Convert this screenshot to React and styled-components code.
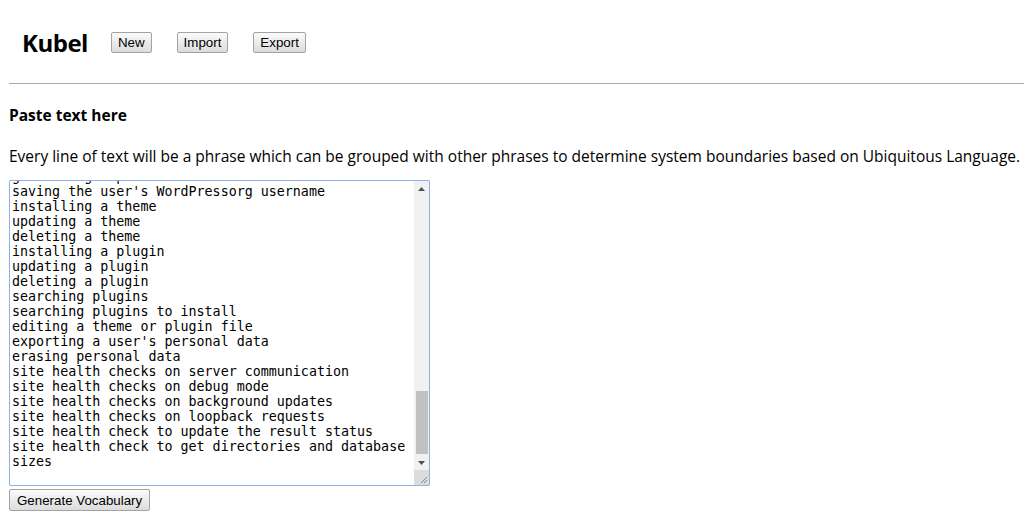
import { useEffect, useRef } from 'react';
import styled, { createGlobalStyle } from 'styled-components';

const GlobalStyle = createGlobalStyle`
  body {
    margin: 8px 0 8px 9px;
    font-family: "Open Sans", "DejaVu Sans", sans-serif;
    font-size: 15.5px;
    color: #000;
    background: #fff;
    overflow: hidden;
  }
`;

const Page = styled.div`
  width: 1015px;
`;

const Header = styled.header`
  display: flex;
  align-items: center;
  gap: 23px;
  height: 68px;
  padding: 0 13px;
  box-sizing: border-box;
`;

const Logo = styled.h1`
  margin: 0;
  font-size: 24px;
  font-weight: 700;
  letter-spacing: -0.5px;
`;

const Button = styled.button`
  font-family: "Liberation Sans", Arial, sans-serif;
  font-size: 13.333px;
  color: #000;
  height: 21px;
  padding: 0 6px;
  border: 1px solid #a3a3a3;
  border-radius: 2px;
  background: linear-gradient(#fbfbfb, #dcdcdc);
  box-sizing: border-box;
  cursor: pointer;
`;

const Actions = styled.div`
  display: flex;
  gap: 25px;
`;

const Rule = styled.hr`
  border: none;
  border-top: 1px solid #a9a9a9;
  margin: 7px 0 0;
`;

const Section = styled.section`
  padding-top: 21px;
`;

const Title = styled.h3`
  margin: 0;
  font-size: 15.5px;
  line-height: 20px;
  font-weight: 700;
`;

const Intro = styled.p`
  margin: 21px 0 14px;
  line-height: 20px;
  white-space: nowrap;
`;

const Field = styled.div`
  display: flex;
  width: 421px;
  height: 306px;
  box-sizing: border-box;
  border: 1px solid #8fb2e6;
  border-radius: 1px;
  background: #fff;
`;

const Input = styled.textarea`
  flex: 1;
  min-width: 0;
  box-sizing: border-box;
  padding: 2px 2px 1px;
  margin: 0;
  border: none;
  outline: none;
  resize: none;
  overflow: hidden;
  font-family: "DejaVu Sans Mono", monospace;
  font-size: 13.333px;
  line-height: 15px;
  color: #000;
  caret-color: #000;
  background: transparent;
`;

const ScrollBar = styled.div`
  display: flex;
  flex-direction: column;
  width: 15px;
  flex: none;
  background: #f1f1f1;
`;

const ScrollButton = styled.div`
  display: flex;
  align-items: center;
  justify-content: center;
  height: 15px;
  flex: none;
`;

const Track = styled.div`
  flex: 1;
  display: flex;
  flex-direction: column;
  justify-content: flex-end;
  padding-bottom: 1px;
`;

const Thumb = styled.div`
  height: 63px;
  margin: 0 1px 0 2px;
  background: #c1c1c1;
`;

const Corner = styled.div`
  height: 15px;
  flex: none;
  background: #dcdcdc;
  display: flex;
  align-items: flex-end;
  justify-content: flex-end;
`;

const GenerateButton = styled(Button)`
  margin-top: 3px;
  height: 22px;
  padding: 0 7px;
`;

const Arrow = ({ down }) => (
  <svg width="7" height="4" viewBox="0 0 7 4">
    <path d={down ? 'M0 0 L7 0 L3.5 4 Z' : 'M0 4 L7 4 L3.5 0 Z'} fill="#505050" />
  </svg>
);

const phrases = [
  'writing a post',
  'editing a post',
  'publishing a post',
  'scheduling a post',
  'deleting a post',
  'restoring a post from trash',
  'creating a draft',
  'previewing a post',
  'adding a category',
  'editing a category',
  'deleting a category',
  'adding a tag',
  'editing a tag',
  'deleting a tag',
  'uploading media',
  'editing an image',
  'deleting media',
  'inserting media into a post',
  'creating a page',
  'editing a page',
  'deleting a page',
  'setting a page template',
  'approving a comment',
  'replying to a comment',
  'marking a comment as spam',
  'deleting a comment',
  'moderating comments',
  'creating a menu',
  'adding items to a menu',
  'assigning a menu location',
  'adding a widget',
  'removing a widget',
  'customizing the theme',
  'changing the site title',
  'changing the site tagline',
  'setting the front page',
  'changing permalinks',
  'changing the timezone',
  'changing the date format',
  'adding a user',
  'editing a user',
  'deleting a user',
  "changing a user's role",
  'resetting a password',
  'logging in',
  'logging out',
  'registering a new account',
  'updating a user profile',
  'importing content',
  'exporting content',
  'updating WordPress core',
  'checking for updates',
  'enabling automatic updates',
  'activating a plugin',
  'deactivating a plugin',
  'activating a theme',
  'creating an application password',
  'revoking an application password',
  'creating a privacy policy page',
  'generating a password',
  "saving the user's WordPressorg username",
  'installing a theme',
  'updating a theme',
  'deleting a theme',
  'installing a plugin',
  'updating a plugin',
  'deleting a plugin',
  'searching plugins',
  'searching plugins to install',
  'editing a theme or plugin file',
  "exporting a user's personal data",
  'erasing personal data',
  'site health checks on server communication',
  'site health checks on debug mode',
  'site health checks on background updates',
  'site health checks on loopback requests',
  'site health check to update the result status',
  'site health check to get directories and database sizes',
];

const initialText = phrases.join('\n') + '\n';

function App() {
  const inputRef = useRef(null);

  useEffect(() => {
    const el = inputRef.current;
    if (!el) return;
    el.focus();
    el.setSelectionRange(initialText.length, initialText.length);
    el.scrollTop = el.scrollHeight;
  }, []);

  return (
    <Page>
      <GlobalStyle />
      <Header>
        <Logo>Kubel</Logo>
        <Actions>
          <Button>New</Button>
          <Button>Import</Button>
          <Button>Export</Button>
        </Actions>
      </Header>
      <Rule />
      <Section>
        <Title>Paste text here</Title>
        <Intro>
          Every line of text will be a phrase which can be grouped with other phrases to determine system boundaries based on Ubiquitous Language.
        </Intro>
        <Field>
          <Input ref={inputRef} defaultValue={initialText} spellCheck={false} />
          <ScrollBar>
            <ScrollButton><Arrow /></ScrollButton>
            <Track><Thumb /></Track>
            <ScrollButton><Arrow down /></ScrollButton>
            <Corner>
              <svg width="15" height="15" viewBox="0 0 15 15">
                <path d="M13 7 L7 13 M13 10 L10 13" stroke="#8a8a8a" strokeWidth="1" />
              </svg>
            </Corner>
          </ScrollBar>
        </Field>
        <GenerateButton>Generate Vocabulary</GenerateButton>
      </Section>
    </Page>
  );
}

export default App;
